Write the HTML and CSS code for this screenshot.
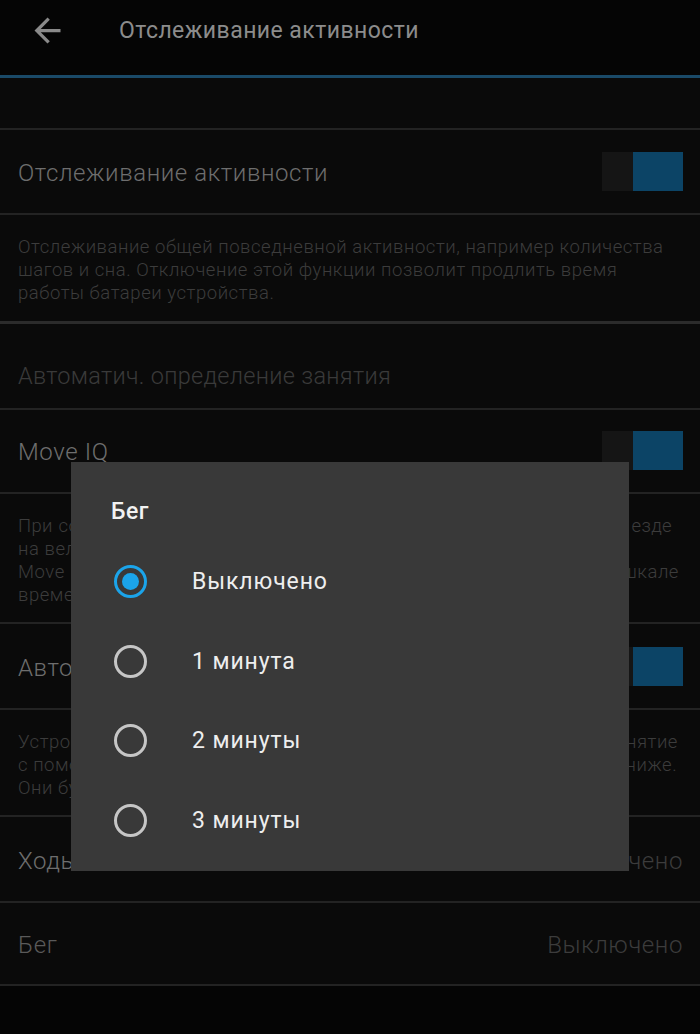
FILE: index.html
```html
<!DOCTYPE html>
<html lang="ru">
<head>
<meta charset="utf-8">
<title>Отслеживание активности</title>
<link rel="stylesheet" href="styles.css">
</head>
<body>
<div class="screen">
  <header class="appbar">
    <div class="toolbar">
      <svg class="back" viewBox="0 0 24 24" width="39" height="39" aria-hidden="true">
        <path d="M20 11H7.83l5.59-5.59L12 4l-8 8 8 8 1.41-1.41L7.83 13H20v-2z"/>
      </svg>
      <span class="appbar-title">Отслеживание активности</span>
    </div>
  </header>
  <div class="accent"></div>
  <div class="spacer"></div>

  <ul class="list">
    <li class="row r1">
      <span class="row-title">Отслеживание активности</span>
      <span class="switch"><span class="thumb"></span></span>
    </li>
    <li class="desc d1">
      <span class="line">Отслеживание общей повседневной активности, например количества</span>
      <span class="line">шагов и сна. Отключение этой функции позволит продлить время</span>
      <span class="line">работы батареи устройства.</span>
    </li>
    <li class="category">Автоматич. определение занятия</li>
    <li class="row r2">
      <span class="row-title">Move IQ</span>
      <span class="switch"><span class="thumb"></span></span>
    </li>
    <li class="desc d2">
      <span class="line fill tight end-672">При событии, соответствующем стандартным шаблонам, например езде</span>
      <span class="line end-634">на велосипеде или бегу не менее 10 минут подряд,</span>
      <span class="line fill end-679">Move IQ автоматически обнаруживает его и показывает на шкале</span>
      <span class="line">времени.</span>
    </li>
    <li class="row r3">
      <span class="row-title">Автоматический запуск</span>
      <span class="switch"><span class="thumb"></span></span>
    </li>
    <li class="desc d3">
      <span class="line fill end-678">Устройство может автоматически создавать и сохранять занятие</span>
      <span class="line fill end-676">с помощью функции Move IQ по истечении интервалов, указанных ниже.</span>
      <span class="line">Они будут отображаться в списке занятий.</span>
    </li>
    <li class="row r4">
      <span class="row-title">Ходьба</span>
      <span class="row-value">Выключено</span>
    </li>
    <li class="row r5">
      <span class="row-title">Бег</span>
      <span class="row-value">Выключено</span>
    </li>
  </ul>

  <div class="dialog" role="dialog" aria-label="Бег">
    <div class="dialog-title">Бег</div>
    <div class="options">
      <div class="option selected"><span class="radio"></span><span class="label">Выключено</span></div>
      <div class="option"><span class="radio"></span><span class="label">1 минута</span></div>
      <div class="option"><span class="radio"></span><span class="label">2 минуты</span></div>
      <div class="option"><span class="radio"></span><span class="label">3 минуты</span></div>
    </div>
  </div>
</div>
</body>
</html>
```

FILE: styles.css
```css
html, body {
  margin: 0;
  padding: 0;
}
body {
  background: #050505;
  font-family: Roboto, "Noto Sans", "Liberation Sans", sans-serif;
  width: 700px;
  height: 1034px;
  overflow: hidden;
}
.screen {
  position: relative;
  width: 700px;
  height: 1034px;
  background: #050505;
}
.appbar {
  height: 75px;
  background: #050505;
}
.toolbar {
  height: 60px;
  display: flex;
  align-items: center;
}
.back {
  fill: #8a8a8a;
  margin-left: 28px;
  flex: none;
}
.appbar-title {
  margin-left: 52px;
  color: #8c8c8c;
  font-size: 23px;
  letter-spacing: 0.45px;
  font-weight: 400;
}
.accent {
  height: 3px;
  background: #1a4a68;
}
.spacer {
  height: 50px;
  background: #0a0a0a;
}
.list {
  list-style: none;
  margin: 0;
  padding: 0;
  background: #0a0a0a;
}
.list > li {
  border-top: 2px solid #232323;
  box-sizing: border-box;
}
.list > li:last-child {
  border-bottom: 2px solid #232323;
}
.row {
  display: flex;
  align-items: center;
  justify-content: space-between;
  padding: 3px 17px 0 18px;
  height: 85px;
  font-weight: 300;
  font-size: 24px;
  letter-spacing: 0.6px;
}
.r2 { height: 84px; padding-top: 1px; }
.r3 { height: 86px; }
.r4 { height: 86px; }
.row-title {
  color: #6e6e6e;
  white-space: nowrap;
}
.row-value {
  color: #3c3c3c;
}
.r5 .row-title {
  color: #5a5a5a;
}
.switch {
  display: flex;
  justify-content: flex-end;
  width: 81px;
  height: 39px;
  margin-top: -3px;
  background: #151515;
  flex: none;
}
.thumb {
  width: 50px;
  height: 39px;
  background: #0c4466;
}
.desc {
  color: #3c3c3c;
  font-size: 18.5px;
  font-weight: 300;
  letter-spacing: 0.55px;
  line-height: 23px;
  padding: 21px 0 0 18px;
  white-space: nowrap;
}
.line {
  display: block;
}
.line.fill {
  text-align: justify;
  text-align-last: justify;
}
.line.tight {
  letter-spacing: 0.33px;
}
.end-672 { width: 654px; }
.end-634 { width: 616px; }
.end-679 { width: 661px; }
.end-678 { width: 660px; }
.end-676 { width: 658px; }
.d1 { height: 108px; }
.d2 { height: 130px; }
.d3 { height: 107px; }
.list > li.category {
  border-top-width: 3px;
  border-top-color: #2b2b2b;
  height: 87px;
  padding: 39px 18px 0;
  color: #3a3a3a;
  font-size: 23.5px;
  letter-spacing: 0.3px;
  font-weight: 300;
  line-height: 26px;
}
.dialog {
  position: absolute;
  left: 71px;
  top: 462px;
  width: 558px;
  height: 409px;
  background: #393939;
  box-sizing: border-box;
  padding-top: 37px;
}
.dialog-title {
  padding-left: 40px;
  color: #f2f2f2;
  font-size: 23px;
  letter-spacing: 0.5px;
  font-weight: 500;
  line-height: 26px;
}
.options {
  margin-top: 17px;
  display: flex;
  flex-direction: column;
}
.option {
  height: 79.5px;
  display: flex;
  align-items: center;
  padding-left: 43px;
}
.radio {
  width: 33px;
  height: 33px;
  box-sizing: border-box;
  border: 3px solid #c6c6c6;
  border-radius: 50%;
  flex: none;
  display: flex;
  align-items: center;
  justify-content: center;
}
.option.selected .radio {
  border-color: #1ba4ea;
}
.option.selected .radio::after {
  content: "";
  width: 17px;
  height: 17px;
  border-radius: 50%;
  background: #1ba4ea;
}
.label {
  margin-left: 45px;
  color: #eeeeee;
  font-size: 23px;
  letter-spacing: 0.9px;
  font-weight: 400;
}
```
